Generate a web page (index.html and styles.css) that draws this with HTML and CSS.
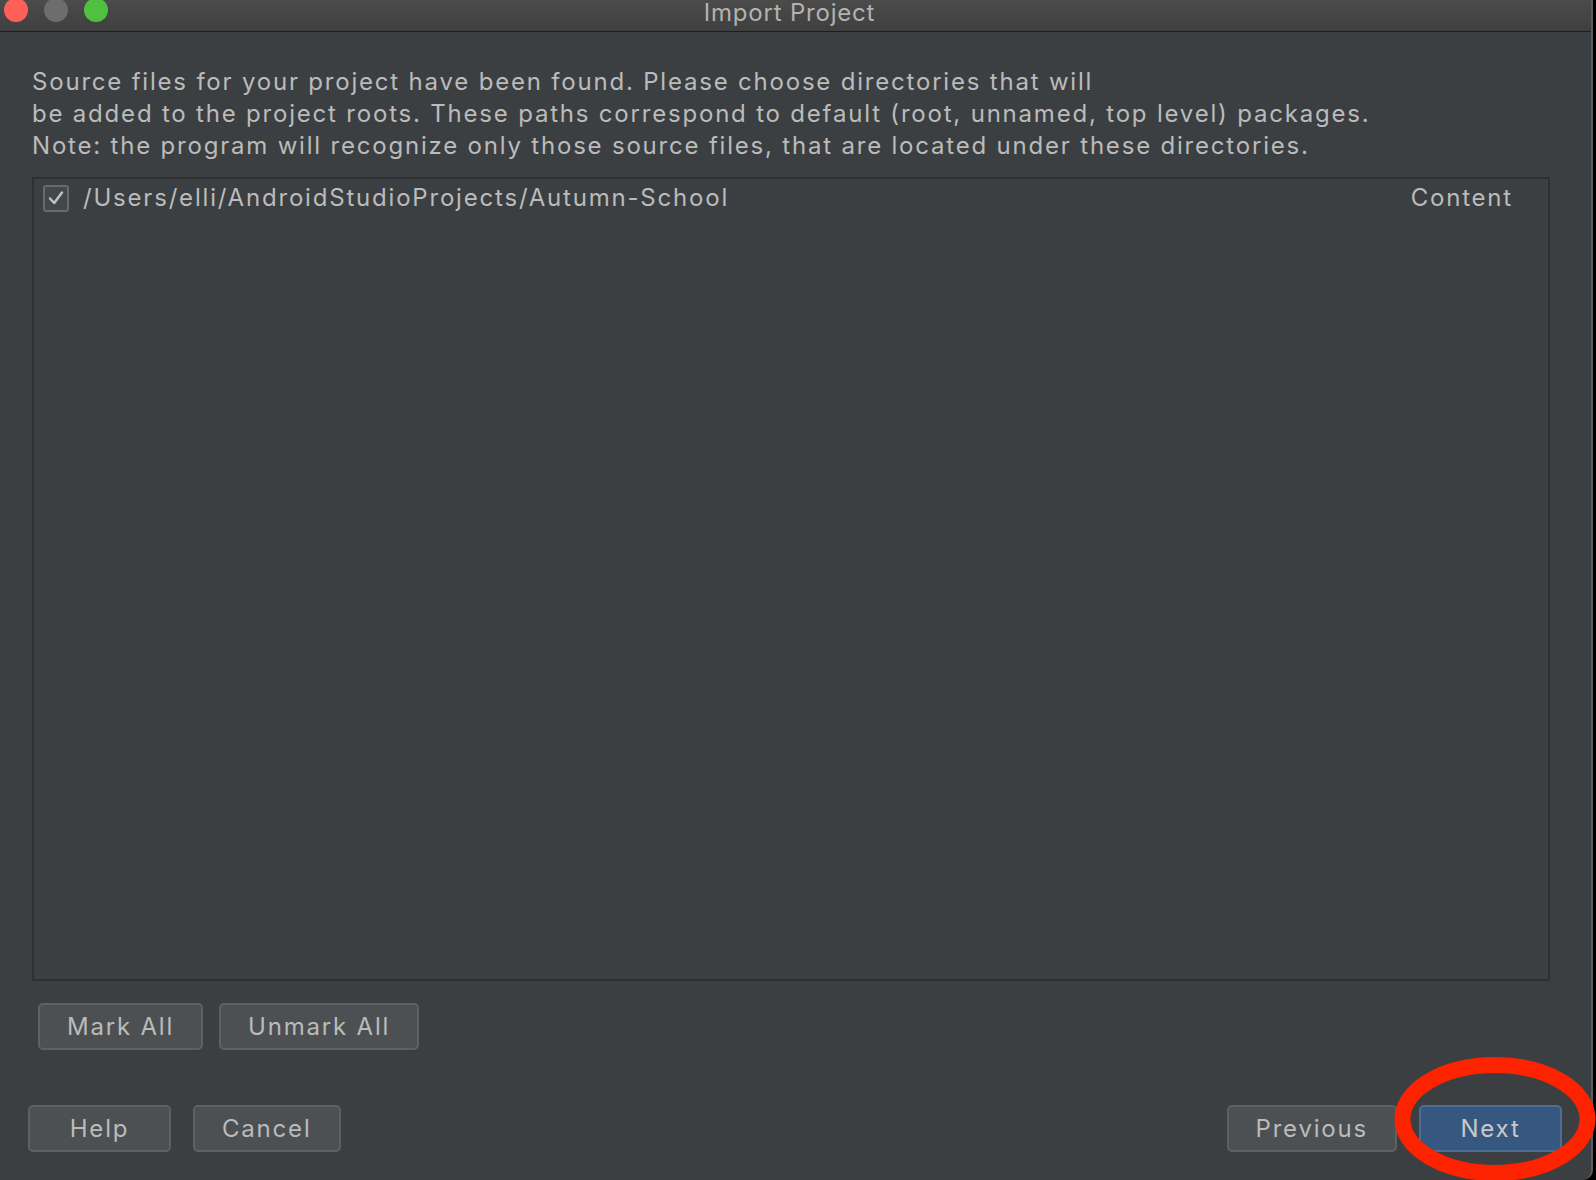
FILE: index.html
```html
<!DOCTYPE html>
<html lang="en">
<head>
<meta charset="utf-8">
<title>Import Project</title>
<link rel="stylesheet" href="styles.css">
</head>
<body>
<div class="window">
  <div class="titlebar">
    <div class="lights">
      <span class="light red"></span>
      <span class="light gray"></span>
      <span class="light green"></span>
    </div>
    <div class="title">Import Project</div>
  </div>
  <div class="content">
    <p class="desc">Source files for your project have been found. Please choose directories that will<br>be added to the project roots. These paths correspond to default (root, unnamed, top level) packages.<br>Note: the program will recognize only those source files, that are located under these directories.</p>
    <div class="listbox">
      <div class="row">
        <span class="checkbox">
          <svg width="22" height="22" viewBox="0 0 22 22"><path d="M5 11.5 L9.2 16 L17 5.5" fill="none" stroke="#c4c4c4" stroke-width="2.4" stroke-linecap="round" stroke-linejoin="round"/></svg>
        </span>
        <span class="path">/Users/elli/AndroidStudioProjects/Autumn-School</span>
        <span class="kind">Content</span>
      </div>
    </div>
    <div class="markrow">
      <button class="btn">Mark All</button>
      <button class="btn">Unmark All</button>
    </div>
    <div class="footer">
      <div class="group left">
        <button class="btn">Help</button>
        <button class="btn">Cancel</button>
      </div>
      <div class="group right">
        <button class="btn">Previous</button>
        <button class="btn primary">Next</button>
      </div>
    </div>
  </div>
</div>
<svg class="annot" width="220" height="140" viewBox="0 0 220 140"><ellipse cx="110" cy="70" rx="92.5" ry="54" fill="none" stroke="#fe2300" stroke-width="16"/></svg>
</body>
</html>
```

FILE: styles.css
```css
html, body {
  margin: 0;
  padding: 0;
  background: #000;
  width: 1596px;
  height: 1180px;
  overflow: hidden;
}
body {
  position: relative;
  font-family: Inter, "Open Sans", "Liberation Sans", sans-serif;
}
.window {
  width: 1591px;
  height: 1180px;
  background: #3c3f41;
  border-right: 2px solid #5a5c5d;
  border-bottom-right-radius: 10px;
  display: flex;
  flex-direction: column;
  box-sizing: content-box;
}
.titlebar {
  height: 31px;
  border-bottom: 1px solid #1d1d1d;
  background: linear-gradient(#4b4b4b, #3f3f3f);
  display: flex;
  align-items: flex-start;
  padding-right: 124px;
  overflow: hidden;
}
.lights {
  display: flex;
  gap: 16px;
  padding-left: 4px;
  margin-top: -2px;
  width: 108px;
}
.light {
  width: 24px;
  height: 24px;
  border-radius: 50%;
  flex: none;
}
.red { background: #fe5f57; }
.gray { background: #6d6d6d; }
.green { background: #4fc03f; }
.title {
  flex: 1;
  text-align: center;
  color: #b2b2b2;
  font-size: 24px;
  line-height: 26px;
  letter-spacing: 0.8px;
  margin-top: 0;
}
.content {
  flex: 1;
  display: flex;
  flex-direction: column;
}
.desc {
  margin: 34px 0 0 32px;
  color: #bbbbbb;
  font-size: 24px;
  line-height: 32px;
  letter-spacing: 1.8px;
}
.listbox {
  margin: 15px 0 0 32px;
  width: 1514px;
  height: 800px;
  border: 2px solid #2d2f30;
  background: #3c3f41;
}
.row {
  display: flex;
  align-items: center;
  height: 34px;
  margin-top: 1px;
  padding: 0 35px 0 9px;
  color: #bbbbbb;
  font-size: 24px;
  letter-spacing: 1.8px;
}
.checkbox {
  width: 22px;
  height: 23px;
  border: 2px solid #676a6c;
  border-radius: 3px;
  background: #43494a;
  display: flex;
  align-items: center;
  justify-content: center;
  flex: none;
  margin-top: 2px;
}
.path {
  margin-left: 14px;
  flex: 1;
}
.kind {
  flex: none;
}
.btn {
  font-family: inherit;
  font-size: 24px;
  letter-spacing: 1.8px;
  color: #bbbbbb;
  background: #4c5052;
  border: 2px solid #5d6163;
  border-radius: 5px;
  height: 47px;
  min-width: 143px;
  padding: 0 27px;
  box-sizing: border-box;
  cursor: default;
}
.btn.primary {
  background: #365880;
  border-color: #4c6e95;
  color: #c9c9c9;
}
.markrow {
  display: flex;
  gap: 16px;
  margin: 22px 0 0 38px;
}
.footer {
  display: flex;
  justify-content: space-between;
  margin: 55px 29px 0 28px;
}
.group {
  display: flex;
  gap: 22px;
}
.annot {
  position: absolute;
  left: 1385px;
  top: 1049px;
}
```
